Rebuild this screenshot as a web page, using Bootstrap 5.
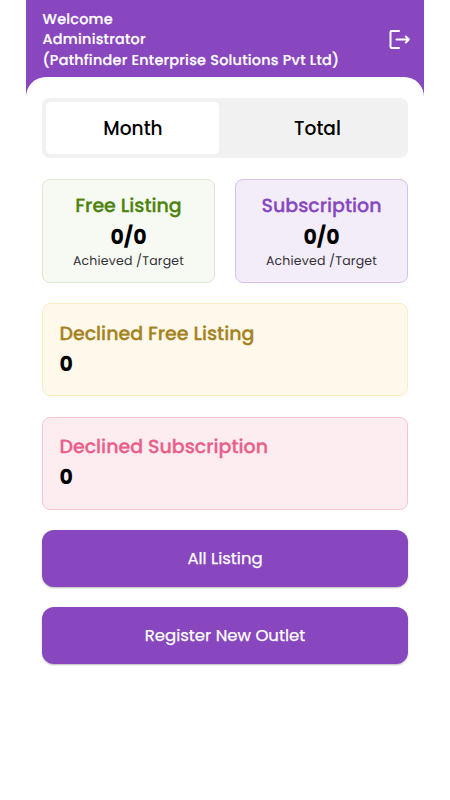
<!DOCTYPE html>
<html lang="en">
<head>
<meta charset="utf-8">
<meta name="viewport" content="width=device-width, initial-scale=1">
<title>Dashboard</title>
<link href="https://cdn.jsdelivr.net/npm/bootstrap@5.3.0/dist/css/bootstrap.min.css" rel="stylesheet">
<style>
  body { font-family: Poppins, Inter, "Open Sans", sans-serif; color: #000; background: #fff; text-rendering: geometricPrecision; }
  .app { width: 398px; min-height: 800px; }
  .app-header { background: #8847be; height: 97px; padding: 10px 14px 0 16.5px; color: #fff; }
  .welcome { font-size: 14.4px; font-weight: 500; line-height: 20.4px; letter-spacing: .25px; -webkit-text-stroke: .2px; }
  .logout { width: 22px; height: 22px; margin-top: 18px; color: #fff; }
  .sheet { margin-top: -20px; border-radius: 20px 20px 0 0; padding: 20.5px 16px; gap: 20.5px; background: #fff; }
  .switcher { background: #f1f1f1; height: 60.5px; padding: 4px; border-radius: 8px; }
  .switcher .btn { font-size: 18.6px; font-weight: 500; color: #000; border: 0; border-radius: 5px; padding: 2.5px 0 0; }
  .switcher .btn.active { background: #fff; color: #000; flex: 0 0 173px; padding-left: 1px; }
  .switcher .btn:last-child { padding-left: 12px; }
  .tiles { gap: 20px; }
  .tile { border: 1px solid; border-radius: 8px; }
  .tile-half { height: 104px; padding-top: 12px; }
  .tile-wide { height: 93px; padding: 15.5px 16.5px; }
  .tile-title { font-size: 19px; font-weight: 500; line-height: 28px; -webkit-text-stroke: .3px; }
  .tile-value { font-size: 20.5px; font-weight: 700; line-height: 33px; }
  .tile-half .tile-value { padding-top: 1px; }
  .tile-note { font-size: 12.5px; line-height: 16px; letter-spacing: .2px; color: #333038; }
  .green { background: #f7faf2; border-color: #dfe9cf; }
  .green .tile-title { color: #4b830d; }
  .purple { background: #f3ecf9; border-color: #d8c0ea; }
  .purple .tile-title { color: #8847be; }
  .yellow { background: #fff9eb; border-color: #faedc4; }
  .yellow .tile-title { color: #a58220; }
  .pink { background: #fdedf0; border-color: #f4c6d3; }
  .pink .tile-title { color: #e8608a; }
  .btn-main, .btn-main:hover { background: #8847be; color: #fff; border: 0; height: 56.5px; border-radius: 12px; padding-top: 7.5px; font-size: 16.5px; font-weight: 400; -webkit-text-stroke: .25px; box-shadow: 0 1px 2px rgba(0,0,0,.28); }
</style>
</head>
<body>
<div class="app mx-auto">
  <header class="app-header d-flex justify-content-between align-items-start">
    <div class="welcome text-nowrap">
      <div>Welcome</div>
      <div>Administrator</div>
      <div>(Pathfinder Enterprise Solutions Pvt Ltd)</div>
    </div>
    <svg class="logout" viewBox="0 0 22 22" fill="none" stroke="currentColor" stroke-width="2" stroke-linecap="round" stroke-linejoin="round" role="img" aria-label="Log out">
      <path d="M11 3H3.7Q2.5 3 2.5 4.2V18.8Q2.5 20 3.7 20H11"/>
      <path d="M8.5 11.5H20.5M17.8 8.5L20.8 11.5L17.8 14.5"/>
    </svg>
  </header>
  <main class="sheet d-flex flex-column position-relative">
    <div class="switcher d-flex">
      <button class="btn active" type="button">Month</button>
      <button class="btn flex-fill" type="button">Total</button>
    </div>
    <div class="tiles d-flex text-center">
      <section class="tile tile-half green flex-fill w-50">
        <div class="tile-title">Free Listing</div>
        <div class="tile-value">0/0</div>
        <div class="tile-note">Achieved /Target</div>
      </section>
      <section class="tile tile-half purple flex-fill w-50">
        <div class="tile-title">Subscription</div>
        <div class="tile-value">0/0</div>
        <div class="tile-note">Achieved /Target</div>
      </section>
    </div>
    <section class="tile tile-wide yellow">
      <div class="tile-title">Declined Free Listing</div>
      <div class="tile-value">0</div>
    </section>
    <section class="tile tile-wide pink">
      <div class="tile-title">Declined Subscription</div>
      <div class="tile-value">0</div>
    </section>
    <button class="btn btn-main w-100" type="button">All Listing</button>
    <button class="btn btn-main w-100" type="button">Register New Outlet</button>
  </main>
</div>
<script src="https://cdn.jsdelivr.net/npm/bootstrap@5.3.0/dist/js/bootstrap.bundle.min.js"></script>
</body>
</html>
